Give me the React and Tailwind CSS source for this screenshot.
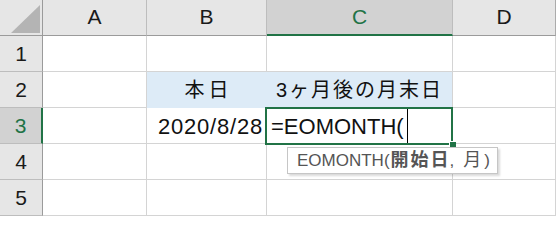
import React from "react";

const font = "font-['Liberation_Sans','Noto_Sans_CJK_JP',sans-serif]";

function ColHead({ label, selected, last }) {
  return (
    <div
      className={`flex items-center justify-center text-[21px] border-r border-b ${
        last ? "border-r-[#ababab]" : "border-r-[#bdbdbd]"
      } ${
        selected
          ? "bg-[#d2d2d2] text-[#217346] border-b-2 border-b-[#217346]"
          : "bg-[#e6e6e6] text-[#1a1a1a] border-b-[#9b9b9b]"
      }`}
    >
      <span className="-mt-px">{label}</span>
    </div>
  );
}

function RowHead({ label, selected }) {
  return (
    <div
      className={`flex items-center justify-center text-[21px] border-b border-b-[#bdbdbd] ${
        selected
          ? "bg-[#d2d2d2] text-[#217346] border-r-2 border-r-[#217346]"
          : "bg-[#e6e6e6] text-[#1a1a1a] border-r border-r-[#9b9b9b]"
      }`}
    >
      {label}
    </div>
  );
}

function Cell({ children, className = "" }) {
  return (
    <div className={`flex items-center border-r border-b border-[#d4d4d4] bg-white ${className}`}>
      {children}
    </div>
  );
}

export default function App() {
  return (
    <div className={`relative w-[556px] h-[217px] overflow-hidden bg-white ${font}`}>
      <div className="grid grid-cols-[43px_104px_120px_186px_103px] grid-rows-[36px_36px_36px_36px_36px_36px]">
        {/* header */}
        <div className="relative bg-[#e6e6e6] border-r border-b border-r-[#9b9b9b] border-b-[#9b9b9b]">
          <svg className="absolute left-0 top-0" width="42" height="35" viewBox="0 0 42 35">
            <polygon points="11,33 40,33 40,5" fill="#b4b4b4" />
          </svg>
        </div>
        <ColHead label="A" />
        <ColHead label="B" />
        <ColHead label="C" selected />
        <ColHead label="D" last />

        {/* row 1 */}
        <RowHead label="1" />
        <Cell />
        <Cell />
        <Cell />
        <Cell />

        {/* row 2 */}
        <RowHead label="2" />
        <Cell />
        <Cell className="!bg-[#ddebf7] !border-[#ddebf7] justify-center text-[20px] tracking-[4px] text-[#111]">
          <span className="pl-[4px]">本日</span>
        </Cell>
        <Cell className="!bg-[#ddebf7] !border-r-[#d4d4d4] !border-b-[#ddebf7] justify-center text-[20px] tracking-[2px] text-[#111]">
          <span>3ヶ月後の月末日</span>
        </Cell>
        <Cell />

        {/* row 3 */}
        <RowHead label="3" selected />
        <Cell />
        <Cell className="justify-end pr-[3px] text-[22px] tracking-[0.8px] text-[#111]">
          <span className="pt-px">2020/8/28</span>
        </Cell>
        <Cell className="text-[22px] text-[#111] pl-[4px]">
          <span className="pt-px">=EOMONTH(</span>
          <span className="ml-[3px] w-px h-[34px] bg-black" />
        </Cell>
        <Cell />

        {/* row 4 */}
        <RowHead label="4" />
        <Cell />
        <Cell />
        <Cell />
        <Cell />

        {/* row 5 */}
        <RowHead label="5" />
        <Cell />
        <Cell />
        <Cell />
        <Cell />
      </div>

      {/* selection box */}
      <div className="absolute left-[265px] top-[107px] w-[188px] h-[38px] border-2 border-[#217346] pointer-events-none" />
      {/* fill handle */}
      <div className="absolute left-[449px] top-[141px] w-[7px] h-[7px] bg-white">
        <div className="ml-px mt-px w-[6px] h-[6px] bg-[#217346]" />
      </div>

      {/* tooltip */}
      <div className="absolute left-[287px] top-[147px] w-[211px] h-[27px] bg-white border border-[#c6c6c6] shadow-[2px_2px_2px_rgba(0,0,0,0.15)] flex items-center pl-[9px] text-[17px] text-[#555] whitespace-nowrap">
        <span>EOMONTH(</span>
        <span className="font-bold tracking-[2px] text-[18px] ml-[1px]">開始日</span>
        <span className="-ml-[1px]">,</span>
        <span className="ml-[9px] text-[18px]">月</span>
        <span className="ml-[3px]">)</span>
      </div>
    </div>
  );
}
